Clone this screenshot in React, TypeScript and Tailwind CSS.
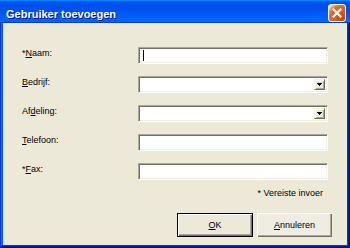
import React from "react";

function Field({ combo, cursor }: { combo?: boolean; cursor?: boolean }) {
  return (
    <div className="relative w-[190px] h-[17px] bg-white border border-t-[#aca899] border-l-[#aca899] border-r-white border-b-white shadow-[inset_1px_1px_#716f64,inset_-1px_-1px_#f1efe2] flex items-center">
      {cursor && <div className="ml-[4px] w-[1px] h-[11px] bg-black" />}
      {combo && (
        <div className="ml-auto mr-[2px] w-[11px] h-[11px] bg-[#ece9d8] border border-t-[#f1efe2] border-l-[#f1efe2] border-r-[#716f64] border-b-[#716f64] shadow-[inset_1px_1px_#fff,inset_-1px_-1px_#aca899] flex items-center justify-center">
          <svg width="5" height="3" viewBox="0 0 5 3">
            <path d="M0 0h5v1H0zM1 1h3v1H1zM2 2h1v1H2z" fill="#000" />
          </svg>
        </div>
      )}
    </div>
  );
}

function Row({ label, combo, cursor }: { label: React.ReactNode; combo?: boolean; cursor?: boolean }) {
  return (
    <div className="flex items-start h-[17px]">
      <div className="w-[116px] text-[9px] leading-[13px] text-black">{label}</div>
      <Field combo={combo} cursor={cursor} />
    </div>
  );
}

export default function App() {
  return (
    <div className="w-[350px] h-[248px] flex flex-col bg-[#0855dd] shadow-[inset_-1px_-1px_#00138c,inset_1px_1px_#0831d9,inset_-2px_-2px_#001ea0,inset_2px_2px_#166aee,inset_-3px_-3px_#003bda,inset_3px_3px_#0855dd] font-['Liberation_Sans',Arial,sans-serif]">
      <div className="h-[23px] shrink-0 flex items-start pl-[6px] pr-[4px] bg-[linear-gradient(180deg,#0997ff,#0053ee_8%,#0050ee_40%,#06f_88%,#06f_93%,#005bff_95%,#003dd7_96%,#003dd7)]">
        <span className="mt-[8px] text-white font-bold text-[11px] leading-[13px] [text-shadow:1px_1px_#0f1089]">
          Gebruiker toevoegen
        </span>
        <div className="ml-auto mt-[4px] w-[18px] h-[18px] rounded-[3px] border border-white bg-[radial-gradient(circle_at_90%_90%,#cc4600_0,#dc6527_55%,#cd7546_70%,#ffccb2_90%,#fff_100%)] flex items-center justify-center">
          <svg width="10" height="10" viewBox="0 0 10 10">
            <path d="M1.5 1.5L8.5 8.5M8.5 1.5L1.5 8.5" stroke="#fff" strokeWidth="2" strokeLinecap="square" />
          </svg>
        </div>
      </div>
      <div className="flex-1 mx-[3px] mb-[3px] bg-[#ece9d8] flex flex-col pl-[19px] pr-[15px] pt-[24px]">
        <div className="flex flex-col gap-[12px]">
          <Row label={<>*<span className="underline">N</span>aam:</>} cursor />
          <Row label={<><span className="underline">B</span>edrijf:</>} combo />
          <Row label={<>Af<span className="underline">d</span>eling:</>} combo />
          <Row label={<><span className="underline">T</span>elefoon:</>} />
          <Row label={<>*<span className="underline">F</span>ax:</>} />
        </div>
        <div className="mt-[7px] mr-[9px] text-right text-[9px] leading-[13px] text-black">* Vereiste invoer</div>
        <div className="mt-[13px] flex justify-end gap-[4px]">
          <div className="w-[76px] h-[24px] border border-black bg-[#ece9d8] shadow-[inset_1px_1px_#fff,inset_-1px_-1px_#716f64,inset_-2px_-2px_#aca899] flex items-center justify-center">
            <span className="text-[9px] leading-[11px] text-black"><span className="underline">O</span>K</span>
          </div>
          <div className="w-[75px] h-[24px] bg-[#efede3] shadow-[inset_1px_1px_#fff,inset_-1px_-1px_#716f64,inset_-2px_-2px_#aca899] flex items-center justify-center">
            <span className="text-[9px] leading-[11px] text-black"><span className="underline">A</span>nnuleren</span>
          </div>
        </div>
      </div>
    </div>
  );
}
